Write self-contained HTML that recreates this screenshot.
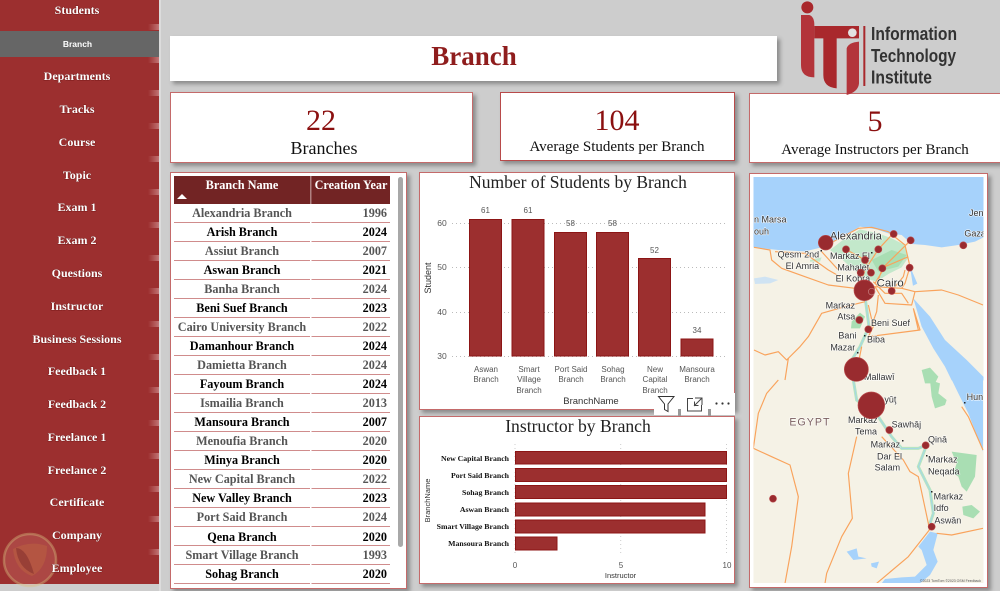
<!DOCTYPE html>
<html><head><meta charset="utf-8"><title>Branch</title>
<style>
html,body{margin:0;padding:0;width:1000px;height:591px;overflow:hidden;background:#cdcdcd}
.c{position:absolute;background:#fff;box-sizing:border-box;border:1px solid #c46a6a;box-shadow:3px 3px 4px #8a8a8a}
svg.o{position:absolute;left:0;top:0}
text{font-family:"Liberation Serif",serif}
.s{font-family:"Liberation Sans",sans-serif}
.m text{font-family:"Liberation Serif",serif;font-weight:700;font-size:12px;fill:#fff;text-anchor:middle;paint-order:stroke;stroke:#6d1414;stroke-width:.7px}
.g text{font-weight:700;font-size:12.2px}
.g .n{text-anchor:middle}.g .y{text-anchor:end}
.g .a{fill:#555}.g .b{fill:#000}
.ax text{font-family:"Liberation Sans",sans-serif;font-size:8px;fill:#555;text-anchor:middle}
.ml text{font-family:"Liberation Sans",sans-serif;font-size:27px;fill:#333;paint-order:stroke;stroke:#fff;stroke-opacity:.8;stroke-width:4px;stroke-linejoin:round}
.r{fill:none;stroke:#f9a35c;stroke-width:3.500;stroke-linejoin:round}
.b1{fill:#9c2f2f;stroke:#8c1515;stroke-width:1}
.bub{fill:#992b2f;stroke:#b8484a;stroke-width:2}
</style></head>
<body>
<div style="position:absolute;left:0;top:0;width:159px;height:584px;background:#9c2f2f"></div>
<div style="position:absolute;left:159px;top:0;width:2px;height:591px;background:#dcdcdc"></div>
<div style="position:absolute;left:0;top:31px;width:159px;height:26px;background:#666"></div>
<div class="c" style="left:170px;top:36px;width:607px;height:45px;border:0"></div>
<div class="c" style="left:170px;top:92px;width:303px;height:71px"></div>
<div class="c" style="left:500px;top:92px;width:235px;height:69px;border-color:#b84a4a"></div>
<div class="c" style="left:749px;top:93px;width:260px;height:70px"></div>
<div class="c" style="left:170px;top:172px;width:237px;height:417px"></div>
<div class="c" style="left:419px;top:172px;width:316px;height:238px"></div>
<div class="c" style="left:419px;top:416px;width:316px;height:168px"></div>
<div class="c" style="left:749px;top:173px;width:239px;height:415px"></div>

<svg class="o" width="1000" height="591" viewBox="0 0 1000 591" xmlns="http://www.w3.org/2000/svg">
<defs><linearGradient id="sm" x1="0" x2="1" y1="0" y2="0"><stop offset="0" stop-color="#d9a0a0" stop-opacity="0"/><stop offset="1" stop-color="#e0b0b0" stop-opacity=".55"/></linearGradient></defs>
<!-- sidebar smudges -->
<g fill="url(#sm)">
<rect x="148" y="24" width="11" height="6"/><rect x="148" y="57" width="11" height="6"/><rect x="148" y="90" width="11" height="6"/><rect x="148" y="123" width="11" height="6"/><rect x="148" y="156" width="11" height="6"/><rect x="148" y="189" width="11" height="6"/><rect x="148" y="222" width="11" height="6"/><rect x="148" y="255" width="11" height="6"/><rect x="148" y="288" width="11" height="6"/><rect x="148" y="321" width="11" height="6"/><rect x="148" y="354" width="11" height="6"/><rect x="148" y="387" width="11" height="6"/><rect x="148" y="420" width="11" height="6"/><rect x="148" y="453" width="11" height="6"/><rect x="148" y="486" width="11" height="6"/><rect x="148" y="516" width="11" height="6"/><rect x="148" y="549" width="11" height="6"/>
</g>
<!-- watermark -->
<circle cx="30" cy="560" r="26" fill="#e8a090" fill-opacity=".22" stroke="#d8c080" stroke-opacity=".4" stroke-width="2.500"/>
<path d="M13 549 Q30 540 47 546 Q47 568 32 576 Q15 570 13 549Z" fill="#c87840" fill-opacity=".3"/>
<path d="M16 548 Q27 548 34 574 Q18 568 16 548Z" fill="#7b2a2a" fill-opacity=".5"/>
<g class="m">
<text x="77" y="14">Students</text>
<text x="77" y="80">Departments</text>
<text x="77" y="113">Tracks</text>
<text x="77" y="146">Course</text>
<text x="77" y="179">Topic</text>
<text x="77" y="211">Exam 1</text>
<text x="77" y="244">Exam 2</text>
<text x="77" y="277">Questions</text>
<text x="77" y="310">Instructor</text>
<text x="77" y="343">Business Sessions</text>
<text x="77" y="375">Feedback 1</text>
<text x="77" y="408">Feedback 2</text>
<text x="77" y="441">Freelance 1</text>
<text x="77" y="474">Freelance 2</text>
<text x="77" y="506">Certificate</text>
<text x="77" y="539">Company</text>
<text x="77" y="572">Employee</text>
</g>
<text class="s" x="77.500" y="47" font-size="8.500" font-weight="700" fill="#fff" text-anchor="middle">Branch</text>

<!-- logo -->
<g transform="translate(780 0) scale(.33333)">
<circle cx="82" cy="22" r="18" fill="#a9282c"/>
<path d="M63 45H88Q103 50 103 75V232Q63 232 63 195Z" fill="#b3343a"/>
<path d="M103 78H237V115H170V265Q130 262 130 225V115H103Z" fill="#a9282c"/>
<path d="M200 145Q205 128 237 125V250Q235 275 200 285Z" fill="#b3343a"/>
<circle cx="217" cy="98" r="13" fill="#e2e2e2"/>
<rect x="250" y="78" width="6" height="180" fill="#a9282c"/>
</g>
<g font-weight="700" font-size="18" fill="#333">
<text class="s" x="871" y="40" textLength="86" lengthAdjust="spacingAndGlyphs">Information</text>
<text class="s" x="871" y="62" textLength="85" lengthAdjust="spacingAndGlyphs">Technology</text>
<text class="s" x="871" y="83.500" textLength="61" lengthAdjust="spacingAndGlyphs">Institute</text>
</g>

<!-- title & KPIs -->
<text x="474" y="65" font-size="27" font-weight="700" fill="#8f1d1d" text-anchor="middle">Branch</text>
<text x="321" y="130" font-size="30" fill="#8b1010" text-anchor="middle">22</text>
<text x="324" y="154" font-size="18" fill="#111" text-anchor="middle">Branches</text>
<text x="617" y="130" font-size="30" fill="#8b1010" text-anchor="middle">104</text>
<text x="617" y="151" font-size="15" fill="#111" text-anchor="middle">Average Students per Branch</text>
<text x="875" y="131" font-size="30" fill="#8b1010" text-anchor="middle">5</text>
<text x="875" y="154" font-size="15" fill="#111" text-anchor="middle">Average Instructors per Branch</text>

<!-- table -->
<rect x="174" y="176" width="216" height="28" fill="#722424"/>
<rect x="310" y="176" width="1.500" height="28" fill="#b08080"/>
<text x="242" y="189" font-size="12.300" font-weight="700" fill="#fff" text-anchor="middle">Branch Name</text>
<text x="351" y="189" font-size="12.200" font-weight="700" fill="#fff" text-anchor="middle">Creation Year</text>
<path d="M177 199L182 194L187 199Z" fill="#fff"/>
<rect x="398" y="177" width="5" height="370" rx="2.500" fill="#a8a8a8"/>
<g stroke="#d08c8c" stroke-width="1">
<path d="M174 222.500H390M174 241.500H390M174 260.500H390M174 279.500H390M174 298.500H390M174 317.500H390M174 336.500H390M174 355.500H390M174 374.500H390M174 393.500H390M174 412.500H390M174 431.500H390M174 450.500H390M174 469.500H390M174 488.500H390M174 507.500H390M174 526.500H390M174 545.500H390M174 564.500H390M174 583.500H390"/>
</g>
<rect x="310" y="205" width="1.500" height="380" fill="#fff"/>
<g class="g">
<g class="a"><text class="n" x="242" y="217">Alexandria Branch</text><text class="y" x="387" y="217">1996</text></g>
<g class="b"><text class="n" x="242" y="236">Arish Branch</text><text class="y" x="387" y="236">2024</text></g>
<g class="a"><text class="n" x="242" y="255">Assiut Branch</text><text class="y" x="387" y="255">2007</text></g>
<g class="b"><text class="n" x="242" y="274">Aswan Branch</text><text class="y" x="387" y="274">2021</text></g>
<g class="a"><text class="n" x="242" y="293">Banha Branch</text><text class="y" x="387" y="293">2024</text></g>
<g class="b"><text class="n" x="242" y="312">Beni Suef Branch</text><text class="y" x="387" y="312">2023</text></g>
<g class="a"><text class="n" x="242" y="331">Cairo University Branch</text><text class="y" x="387" y="331">2022</text></g>
<g class="b"><text class="n" x="242" y="350">Damanhour Branch</text><text class="y" x="387" y="350">2024</text></g>
<g class="a"><text class="n" x="242" y="369">Damietta Branch</text><text class="y" x="387" y="369">2024</text></g>
<g class="b"><text class="n" x="242" y="388">Fayoum Branch</text><text class="y" x="387" y="388">2024</text></g>
<g class="a"><text class="n" x="242" y="407">Ismailia Branch</text><text class="y" x="387" y="407">2013</text></g>
<g class="b"><text class="n" x="242" y="426">Mansoura Branch</text><text class="y" x="387" y="426">2007</text></g>
<g class="a"><text class="n" x="242" y="445">Menoufia Branch</text><text class="y" x="387" y="445">2020</text></g>
<g class="b"><text class="n" x="242" y="464">Minya Branch</text><text class="y" x="387" y="464">2020</text></g>
<g class="a"><text class="n" x="242" y="483">New Capital Branch</text><text class="y" x="387" y="483">2022</text></g>
<g class="b"><text class="n" x="242" y="502">New Valley Branch</text><text class="y" x="387" y="502">2023</text></g>
<g class="a"><text class="n" x="242" y="521">Port Said Branch</text><text class="y" x="387" y="521">2024</text></g>
<g class="b"><text class="n" x="242" y="541">Qena Branch</text><text class="y" x="387" y="541">2020</text></g>
<g class="a"><text class="n" x="242" y="559">Smart Village Branch</text><text class="y" x="387" y="559">1993</text></g>
<g class="b"><text class="n" x="242" y="578">Sohag Branch</text><text class="y" x="387" y="578">2020</text></g>
</g>

<!-- chart 1 -->
<text x="578" y="188" font-size="17.500" fill="#222" text-anchor="middle">Number of Students by Branch</text>
<g stroke="#bbb" stroke-width="1" stroke-dasharray="1 3"><path d="M452 223.500H728M452 267.500H728M452 312.500H728M452 356.500H728"/></g>
<rect class="b1" x="469.500" y="219.500" width="32" height="136.500"/>
<rect class="b1" x="512" y="219.500" width="32" height="136.500"/>
<rect class="b1" x="554.500" y="232.500" width="32" height="123.500"/>
<rect class="b1" x="596.500" y="232.500" width="32" height="123.500"/>
<rect class="b1" x="638.500" y="258.500" width="32" height="97.500"/>
<rect class="b1" x="681" y="339" width="32" height="17"/>
<g class="ax">
<text x="485.500" y="213">61</text><text x="528" y="213">61</text><text x="570.500" y="226">58</text><text x="612.500" y="226">58</text><text x="654.500" y="253">52</text><text x="697" y="333">34</text>
<text x="442" y="226" style="font-size:8.500px">60</text><text x="442" y="270" style="font-size:8.500px">50</text><text x="442" y="315" style="font-size:8.500px">40</text><text x="442" y="359" style="font-size:8.500px">30</text>
<text x="486" y="372">Aswan</text><text x="486" y="382">Branch</text>
<text x="529" y="372">Smart</text><text x="529" y="382">Village</text><text x="529" y="393">Branch</text>
<text x="571" y="372">Port Said</text><text x="571" y="382">Branch</text>
<text x="613" y="372">Sohag</text><text x="613" y="382">Branch</text>
<text x="655" y="372">New</text><text x="655" y="382">Capital</text><text x="655" y="393">Branch</text>
<text x="697" y="372">Mansoura</text><text x="697" y="382">Branch</text>
<text x="591" y="404" style="font-size:9.500px;fill:#333">BranchName</text>
<text transform="translate(431 278) rotate(-90)" style="font-size:9px;fill:#333">Student</text>
</g>

<!-- chart 2 -->
<text x="578" y="432" font-size="17.600" fill="#222" text-anchor="middle">Instructor by Branch</text>
<g stroke="#ccc" stroke-width="1" stroke-dasharray="1 3"><path d="M515 444V556M620.700 444V556M726.500 444V556"/></g>
<rect class="b1" x="515.500" y="451.500" width="211" height="12.500"/>
<rect class="b1" x="515.500" y="468.500" width="211" height="13"/>
<rect class="b1" x="515.500" y="485.500" width="211" height="13"/>
<rect class="b1" x="515.500" y="503" width="189.500" height="13"/>
<rect class="b1" x="515.500" y="520" width="189.500" height="13"/>
<rect class="b1" x="515.500" y="537" width="41.500" height="13"/>
<g font-size="7.800" font-weight="700" fill="#111" text-anchor="end">
<text x="509" y="461">New Capital Branch</text><text x="509" y="478">Port Said Branch</text><text x="509" y="495">Sohag Branch</text><text x="509" y="512">Aswan Branch</text><text x="509" y="529">Smart Village Branch</text><text x="509" y="546">Mansoura Branch</text>
</g>
<g class="ax">
<text x="515" y="568">0</text><text x="621" y="568">5</text><text x="727" y="568">10</text>
<text x="620.500" y="578" style="font-size:7.500px;fill:#333">Instructor</text>
<text transform="translate(430 500.500) rotate(-90)" style="font-size:7.500px;fill:#333">BranchName</text>
</g>

<!-- map -->
<svg x="753.500" y="177" width="230" height="406" viewBox="753.500 177 230 406">
<rect x="753" y="177" width="231" height="406" fill="#f5f2e6"/>
<g transform="translate(745 170) scale(.33333)">
<path d="M20 20H720V200L690 215 640 225 590 232 540 225 500 222 470 195 430 190 395 178 345 170 300 195 265 215 230 232 180 244 100 240 60 236 20 232Z" fill="#a6d2fb"/>
<path d="M505 385 530 470 565 535 600 590 620 631H720V625L665 570 600 510 555 440Z" fill="#a6d2fb"/>
<path d="M498 300 515 340 505 345Z" fill="#a6d2fb" stroke="#a6d2fb" stroke-width="3"/>
<path d="M255 240 300 205 345 178 400 190 440 205 480 225 490 262 470 292 430 312 395 335 360 325 320 295 285 262Z" fill="#c3e8cb"/>
<path d="M380 270 440 240 485 255 460 290 400 305Z" fill="#a9deb3"/>
<path d="M195 270 230 262 225 275 195 275Z" fill="#c3e8cb"/>
<path d="M320 455 345 428 360 440 345 475 318 475Z" fill="#a9deb3"/>
<path d="M360 380 372 470 345 530 320 570" fill="none" stroke="#b5e5c1" stroke-width="9"/>
<path d="M360 380 372 470 345 530 320 570" fill="none" stroke="#9fd0f5" stroke-width="2"/>
<path d="M530 600 555 593 580 620 570 640H540Z" fill="#a9deb3"/>
<path d="M27 325 60 320 100 330 75 340 30 342Z" fill="#cfe3f3"/>
<path class="r" d="M27 232 75 240 80 270 110 295 180 320 250 345 330 355M90 245 180 250 250 300 285 320M230 245 280 300M265 215 340 175 380 172 430 185 480 225 495 290 480 340 470 355M330 355 390 350 470 355 510 365 590 360 640 375 714 405M390 350 420 400 500 405 510 365M360 395 300 410 230 430 190 500 165 530 125 570 100 545 60 555 27 540M370 405 385 470 370 500 525 480 505 415M385 335 420 370 470 370 490 400M350 530 330 630M400 375 395 425 375 480M490 260 420 290 390 340M520 480 505 415M303 238 360 270 378 308M400 238 360 300 345 345M440 195 400 238M497 211 412 295 395 345M440 363 475 320 480 300"/>
<path class="r" d="M130 565 120 630"/>
</g>
<g transform="translate(745 380) scale(.33333)">
<path d="M620 -1 640 40 670 100 714 215V-1Z" fill="#a6d2fb"/>
<path d="M325 0 335 60 400 110 440 170 470 205 520 205 545 195 520 260 555 330 565 400 555 430" fill="none" stroke="#b5e5c1" stroke-width="9"/>
<path d="M325 0 335 60 400 110 440 170 470 205 520 205 545 195 520 260 555 330 565 400 555 430" fill="none" stroke="#9fd0f5" stroke-width="2"/>
<path d="M555 0 585 10 580 40 605 60 600 75 570 85 560 50Z" fill="#a9deb3"/>
<path d="M620 215 695 225 690 290 665 335 650 320 640 290 625 280 635 250Z" fill="#a9deb3"/>
<path d="M652 380 680 375 705 395 685 415 655 405Z" fill="#a9deb3"/>
<path d="M555 455 578 460 565 510 578 545 555 585 525 610H410L420 597 470 592 510 590 545 555 530 510 520 500Z" fill="#a6d2fb"/>
<path d="M305 515 335 505 340 530 365 535 325 540Z" fill="#a6d2fb"/>
<path d="M378 550 402 545 395 565 380 560Z" fill="#a6d2fb"/>
<path class="r" d="M100 0 65 40 40 100 25 205 80 230 135 255 160 350 140 500 120 610M335 170 310 280 322 415 290 470 245 580 240 610M410 170 475 240 495 275 520 290 550 430 553 450 490 530 395 610M575 460 620 465 714 445M650 80 670 110 714 210"/>
</g>
<g class="ml">
<g transform="translate(745 170) scale(.33333)">
<text x="27" y="158">n Marsa</text><text x="27" y="193">ouh</text>
<text x="255" y="208" style="font-size:33px">Alexandria</text>
<text x="98" y="263">Qesm 2nd</text><text x="122" y="297">El Amria</text>
<text x="255" y="267">Markaz El</text><text x="277" y="302">Mahalet</text><text x="272" y="335">El Kobra</text>
<text x="395" y="349" style="font-size:34px">Cairo</text>
<text x="242" y="416">Markaz</text><text x="277" y="449">Atsa</text><text x="378" y="468">Beni Suef</text>
<text x="280" y="506">Bani</text><text x="366" y="517">Biba</text><text x="256" y="541">Mazar</text>
<text x="357" y="630">Mallawī</text>
<text x="672" y="138">Jen</text><text x="658" y="200">Gaza</text>
</g>
<g transform="translate(745 380) scale(.33333)">
<text x="418" y="68">yūţ</text>
<text x="133" y="137" style="font-size:32px;fill:#7b5f5f;letter-spacing:3px">EGYPT</text>
<text x="309" y="129">Markaz</text><text x="330" y="163">Tema</text><text x="440" y="142">Sawhāj</text>
<text x="377" y="203">Markaz</text><text x="396" y="238">Dar El</text><text x="389" y="272">Salam</text>
<text x="549" y="188">Qinā</text><text x="549" y="248">Markaz</text><text x="549" y="283">Neqada</text>
<text x="566" y="358">Markaz</text><text x="566" y="393">Idfo</text><text x="568" y="431">Aswān</text>
<text x="665" y="60">Hun</text>
</g>
</g>
<g fill="#222"><rect x="820.500" y="250" width="1.500" height="1.500"/><rect x="871" y="252" width="1.500" height="1.500"/><rect x="857" y="352" width="1.500" height="1.500"/><rect x="864" y="335" width="1.500" height="1.500"/><rect x="902" y="440" width="1.500" height="1.500"/><rect x="926" y="455" width="1.500" height="1.500"/><rect x="931" y="491" width="1.500" height="1.500"/><rect x="964" y="402" width="1.500" height="1.500"/></g>
<g transform="translate(745 170) scale(.33333)">
<circle class="bub" cx="242" cy="218" r="22"/><circle class="bub" cx="303" cy="238" r="10.500"/><circle class="bub" cx="446" cy="192" r="10.500"/><circle class="bub" cx="497" cy="211" r="10.500"/><circle class="bub" cx="400" cy="238" r="10.500"/><circle class="bub" cx="360" cy="270" r="10.500"/><circle class="bub" cx="412" cy="295" r="10.500"/><circle class="bub" cx="494" cy="293" r="10.500"/><circle class="bub" cx="655" cy="226" r="10.500"/><circle class="bub" cx="347" cy="308" r="10.500"/><circle class="bub" cx="378" cy="308" r="10.500"/><circle class="bub" cx="358" cy="361" r="31"/><circle cx="380" cy="365" r="10" fill="none" stroke="#c98080" stroke-width="2"/><circle class="bub" cx="440" cy="363" r="10.500"/><circle class="bub" cx="343" cy="450" r="10.500"/><circle class="bub" cx="370" cy="478" r="10.500"/><circle class="bub" cx="334" cy="598" r="36"/>
</g>
<g transform="translate(745 380) scale(.33333)">
<circle class="bub" cx="379" cy="76" r="40"/><circle class="bub" cx="433" cy="150" r="10.500"/><circle class="bub" cx="542" cy="196" r="10.500"/><circle class="bub" cx="84" cy="356" r="10.500"/><circle class="bub" cx="560" cy="440" r="10.500"/>
</g>
<text class="s" x="981" y="582" font-size="3.500" fill="#555" text-anchor="end">©2023 TomTom ©2023 OSM Feedback</text>
</svg>

<!-- visual header, drawn above the card edges -->
<rect x="654" y="393" width="24" height="22" fill="#fff"/><rect x="681" y="393" width="27" height="22" fill="#fff"/><rect x="711" y="393" width="24" height="22" fill="#fff"/>
<rect x="678" y="409" width="3" height="7" fill="#999"/><rect x="708" y="409" width="3" height="7" fill="#999"/>
<path d="M658.500 396.500H674L668 404V411.500L664.500 409.500V404Z" fill="none" stroke="#333" stroke-width="1"/>
<path d="M693 398.500H687.500V411H701.500V405M695 398H702V405M702 398L694 406M694.500 401.500V405.500H698.500" fill="none" stroke="#444" stroke-width="1"/>
<g fill="#333"><circle cx="716.500" cy="403.500" r="1.100"/><circle cx="722.500" cy="403.500" r="1.100"/><circle cx="728.500" cy="403.500" r="1.100"/></g>
</svg>
</body></html>
